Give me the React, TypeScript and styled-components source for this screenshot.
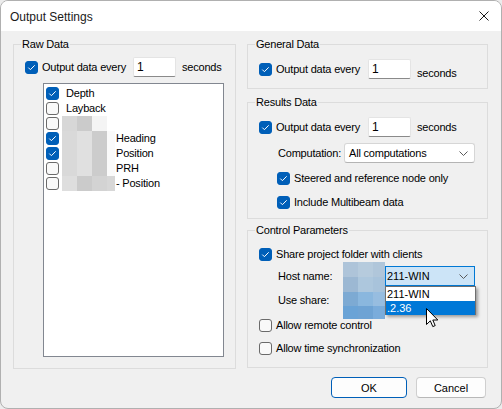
import React from "react";
import styled, { createGlobalStyle } from "styled-components";

const GlobalStyle = createGlobalStyle`
  html, body { margin: 0; padding: 0; background: #ececec; }
  body { font-family: "Liberation Sans", Arial, sans-serif; }
  * { box-sizing: border-box; }
`;

const Window = styled.div`
  width: 502px;
  height: 409px;
  border: 1px solid #b0b0b0;
  border-radius: 8px;
  overflow: hidden;
  display: flex;
  flex-direction: column;
  background: #f0f0f0;
  font-family: "Liberation Sans", Arial, sans-serif;
  font-size: 11px;
  letter-spacing: -0.2px;
  color: #000;
`;

const TitleBar = styled.div`
  height: 30px;
  flex: none;
  background: #ffffff;
  display: flex;
  align-items: center;
  justify-content: space-between;
  padding: 0 0 0 9px;
`;

const Title = styled.span`
  font-size: 12px;
  letter-spacing: 0;
  color: #1a1a1a;
  padding-top: 1px;
`;

const CloseButton = styled.div`
  width: 46px;
  height: 30px;
  display: flex;
  align-items: center;
  justify-content: center;
  margin-right: -6px;
`;

const Body = styled.div`
  flex: 1;
  display: flex;
  flex-direction: column;
  padding: 13px 0 0 12px;
`;

const Columns = styled.div`
  display: flex;
  gap: 11px;
  align-items: flex-start;
`;

const RightColumn = styled.div`
  width: 241px;
  display: flex;
  flex-direction: column;
`;

const Group = styled.div<{ $w?: number; $h: number; $pt: number; $mt?: number }>`
  position: relative;
  width: ${(p) => (p.$w ? `${p.$w}px` : "100%")};
  height: ${(p) => p.$h}px;
  margin-top: ${(p) => p.$mt ?? 0}px;
  border: 1px solid #dcdcdc;
  padding: ${(p) => p.$pt}px 0 0 11px;
  display: flex;
  flex-direction: column;
`;

const Caption = styled.span`
  position: absolute;
  top: -7px;
  left: 7px;
  line-height: 13px;
  padding: 0 1px;
  background: #f0f0f0;
`;

const Row = styled.div<{ $mt?: number; $indent?: number }>`
  display: flex;
  align-items: center;
  height: 20px;
  flex: none;
  margin-top: ${(p) => p.$mt ?? 0}px;
  padding-left: ${(p) => p.$indent ?? 0}px;
`;

const CheckLabel = styled.label<{ $w?: number }>`
  display: flex;
  align-items: center;
  gap: 4px;
  line-height: 13px;
  white-space: nowrap;
  width: ${(p) => (p.$w ? `${p.$w}px` : "auto")};
  flex: none;
`;

const Box = styled.span<{ $checked: boolean }>`
  width: 13px;
  height: 13px;
  flex: none;
  border-radius: 3px;
  display: inline-flex;
  align-items: center;
  justify-content: center;
  background: ${(p) => (p.$checked ? "#005fb8" : "#f9f9f9")};
  border: 1px solid ${(p) => (p.$checked ? "#005fb8" : "#6a6a6a")};
`;

const FieldLabel = styled.span<{ $w: number }>`
  width: ${(p) => p.$w}px;
  flex: none;
  line-height: 13px;
  padding-left: 1px;
  white-space: nowrap;
`;

const TextBox = styled.div`
  width: 43px;
  height: 20px;
  flex: none;
  background: #ffffff;
  border: 1px solid #e4e4e4;
  border-bottom-color: #8a8a8a;
  border-radius: 2px;
  padding-left: 3px;
  display: flex;
  align-items: center;
  font-size: 12px;
  letter-spacing: 0;
`;

const Seconds = styled.span<{ $drop?: boolean }>`
  margin-left: 6px;
  line-height: 13px;
  align-self: ${(p) => (p.$drop ? "flex-start" : "center")};
  padding-top: ${(p) => (p.$drop ? 8 : 0)}px;
`;

const List = styled.div`
  width: 181px;
  height: 274px;
  margin: 6px 0 0 18px;
  background: #ffffff;
  border: 1px solid #828790;
  padding: 2px 0 0 2px;
  display: flex;
  flex-direction: column;
`;

const ListRow = styled.div`
  height: 15px;
  display: flex;
  align-items: center;
  white-space: nowrap;
`;

const ItemText = styled.span<{ $ml: number }>`
  margin-left: ${(p) => p.$ml}px;
  line-height: 13px;
`;

const Mosaic = styled.span`
  display: flex;
  height: 15px;
  margin-left: 3px;
`;

const Cell = styled.span<{ $c: string; $w: number }>`
  width: ${(p) => p.$w}px;
  height: 100%;
  background: ${(p) => p.$c};
`;

const Combo = styled.div<{ $w: number; $focused?: boolean }>`
  width: ${(p) => p.$w}px;
  height: 20px;
  flex: none;
  border-radius: ${(p) => (p.$focused ? 0 : 3)}px;
  background: ${(p) => (p.$focused ? "#cce4f7" : "#ffffff")};
  border: 1px solid ${(p) => (p.$focused ? "#0078d4" : "#d6d6d6")};
  border-bottom-color: ${(p) => (p.$focused ? "#0078d4" : "#b4b4b4")};
  display: flex;
  align-items: center;
  justify-content: space-between;
  padding: 0 6px 0 ${(p) => (p.$focused ? 1 : 4)}px;
  letter-spacing: ${(p) => (p.$focused ? 0 : -0.2)}px;
  line-height: 13px;
`;

const Dropdown = styled.div`
  position: absolute;
  left: 137px;
  top: 55px;
  width: 91px;
  height: 29px;
  background: #ffffff;
  border: 1px solid #6e6e6e;
  box-shadow: 2px 2px 3px rgba(0, 0, 0, 0.35);
  display: flex;
  flex-direction: column;
  letter-spacing: 0;
  z-index: 2;
`;

const DropItem = styled.div<{ $selected?: boolean }>`
  height: 14px;
  line-height: 14px;
  padding-left: 1px;
  background: ${(p) => (p.$selected ? "#0078d7" : "#ffffff")};
  color: ${(p) => (p.$selected ? "#ffffff" : "#000000")};
`;

const Redaction = styled.div`
  position: absolute;
  left: 95px;
  top: 31px;
  display: grid;
  grid-template-columns: 15px 15px 12px;
  grid-template-rows: 15px 15px 14px 13px;
  z-index: 1;
`;

const RCell = styled.span<{ $c: string }>`
  background: ${(p) => p.$c};
`;

const Cursor = styled.svg`
  position: absolute;
  left: 178px;
  top: 77px;
  z-index: 3;
`;

const Footer = styled.div`
  display: flex;
  justify-content: flex-end;
  gap: 9px;
  margin-top: 8px;
  padding-right: 15px;
`;

const Button = styled.div<{ $w: number; $default?: boolean }>`
  width: ${(p) => p.$w}px;
  height: 21px;
  border-radius: 4px;
  background: #fdfdfd;
  border: 1px solid ${(p) => (p.$default ? "#005fb8" : "#cfcfcf")};
  border-bottom-color: ${(p) => (p.$default ? "#005fb8" : "#b8b8b8")};
  display: flex;
  align-items: center;
  justify-content: center;
  letter-spacing: 0;
`;

const Check = ({ checked }: { checked: boolean }) => (
  <Box $checked={checked}>
    {checked && (
      <svg width="11" height="11" viewBox="0 0 11 11">
        <path d="M2.3 5.6 L4.4 7.7 L8.7 3.3" fill="none" stroke="#ffffff" strokeWidth="1" />
      </svg>
    )}
  </Box>
);

const Chevron = () => (
  <svg width="9" height="5" viewBox="0 0 9 5">
    <path d="M0.5 0.5 L4.5 4.5 L8.5 0.5" fill="none" stroke="#5a5a5a" strokeWidth="1" />
  </svg>
);

type Item = { label: string; checked: boolean; mosaic?: string[] };

const rawItems: Item[] = [
  { label: "Depth", checked: true },
  { label: "Layback", checked: false },
  { label: "", checked: false, mosaic: ["#d7d7d7", "#cbcbcb", "#f4f4f4", "#ffffff"] },
  { label: "Heading", checked: true, mosaic: ["#d9d9d9", "#e0e0e0", "#cccccc", "#fafafa"] },
  { label: "Position", checked: true, mosaic: ["#d9d9d9", "#e0e0e0", "#cccccc", "#fafafa"] },
  { label: "PRH", checked: false, mosaic: ["#d9d9d9", "#e0e0e0", "#cccccc", "#fafafa"] },
  { label: "- Position", checked: false, mosaic: ["#dedede", "#cbcbcb", "#d3d3d3", "#d7d7d7"] },
];

const cellWidths = [15, 15, 15, 8];

const redactColors = [
  "#aec4d9", "#b6cbdd", "#b0c6da",
  "#9cb8d3", "#adc7dd", "#a8c3db",
  "#7daad3", "#8ab7de", "#97bde0",
  "#6aa3d6", "#6ea3d4", "#7aacdb",
];

export default function App() {
  return (
    <>
      <GlobalStyle />
      <Window>
        <TitleBar>
          <Title>Output Settings</Title>
          <CloseButton>
            <svg width="10" height="10" viewBox="0 0 10 10">
              <path d="M0.5 0.5 L9.5 9.5 M9.5 0.5 L0.5 9.5" stroke="#1a1a1a" strokeWidth="1" />
            </svg>
          </CloseButton>
        </TitleBar>
        <Body>
          <Columns>
            <Group $w={223} $h={325} $pt={12}>
              <Caption>Raw Data</Caption>
              <Row>
                <CheckLabel $w={108}>
                  <Check checked />
                  Output data every
                </CheckLabel>
                <TextBox>1</TextBox>
                <Seconds>seconds</Seconds>
              </Row>
              <List>
                {rawItems.map((it, i) => (
                  <ListRow key={i}>
                    <Check checked={it.checked} />
                    {it.mosaic && (
                      <Mosaic>
                        {it.mosaic.map((c, j) => (
                          <Cell key={j} $c={c} $w={cellWidths[j]} />
                        ))}
                      </Mosaic>
                    )}
                    {it.label && <ItemText $ml={it.mosaic ? 1 : 7}>{it.label}</ItemText>}
                  </ListRow>
                ))}
              </List>
            </Group>
            <RightColumn>
              <Group $h={45} $pt={14}>
                <Caption>General Data</Caption>
                <Row>
                  <CheckLabel $w={109}>
                    <Check checked />
                    Output data every
                  </CheckLabel>
                  <TextBox>1</TextBox>
                  <Seconds $drop>seconds</Seconds>
                </Row>
              </Group>
              <Group $h={117} $pt={14} $mt={13}>
                <Caption>Results Data</Caption>
                <Row>
                  <CheckLabel $w={109}>
                    <Check checked />
                    Output data every
                  </CheckLabel>
                  <TextBox>1</TextBox>
                  <Seconds>seconds</Seconds>
                </Row>
                <Row $mt={6} $indent={18}>
                  <FieldLabel $w={67}>Computation:</FieldLabel>
                  <Combo $w={131}>
                    <span>All computations</span>
                    <Chevron />
                  </Combo>
                </Row>
                <Row $mt={5} $indent={18}>
                  <CheckLabel>
                    <Check checked />
                    Steered and reference node only
                  </CheckLabel>
                </Row>
                <Row $mt={4} $indent={18}>
                  <CheckLabel>
                    <Check checked />
                    Include Multibeam data
                  </CheckLabel>
                </Row>
              </Group>
              <Group $h={138} $pt={13} $mt={11}>
                <Caption>Control Parameters</Caption>
                <Row>
                  <CheckLabel>
                    <Check checked />
                    Share project folder with clients
                  </CheckLabel>
                </Row>
                <Row $mt={2} $indent={18}>
                  <FieldLabel $w={108}>Host name:</FieldLabel>
                  <Combo $w={90} $focused>
                    <span>211-WIN</span>
                    <Chevron />
                  </Combo>
                </Row>
                <Row $mt={4} $indent={18}>
                  <FieldLabel $w={108}>Use share:</FieldLabel>
                </Row>
                <Row $mt={5}>
                  <CheckLabel>
                    <Check checked={false} />
                    Allow remote control
                  </CheckLabel>
                </Row>
                <Row $mt={3}>
                  <CheckLabel>
                    <Check checked={false} />
                    Allow time synchronization
                  </CheckLabel>
                </Row>
                <Redaction>
                  {redactColors.map((c, i) => (
                    <RCell key={i} $c={c} />
                  ))}
                </Redaction>
                <Dropdown>
                  <DropItem>211-WIN</DropItem>
                  <DropItem $selected>.2.36</DropItem>
                </Dropdown>
                <Cursor width="13" height="20" viewBox="0 0 13 20">
                  <path
                    d="M0.5 0.5 L0.5 16.5 L4.3 12.8 L6.8 18.6 L9.2 17.6 L6.8 12 L11.8 12 Z"
                    fill="#ffffff"
                    stroke="#000000"
                    strokeWidth="1"
                    strokeLinejoin="round"
                  />
                </Cursor>
              </Group>
            </RightColumn>
          </Columns>
          <Footer>
            <Button $w={76} $default>OK</Button>
            <Button $w={70}>Cancel</Button>
          </Footer>
        </Body>
      </Window>
    </>
  );
}
